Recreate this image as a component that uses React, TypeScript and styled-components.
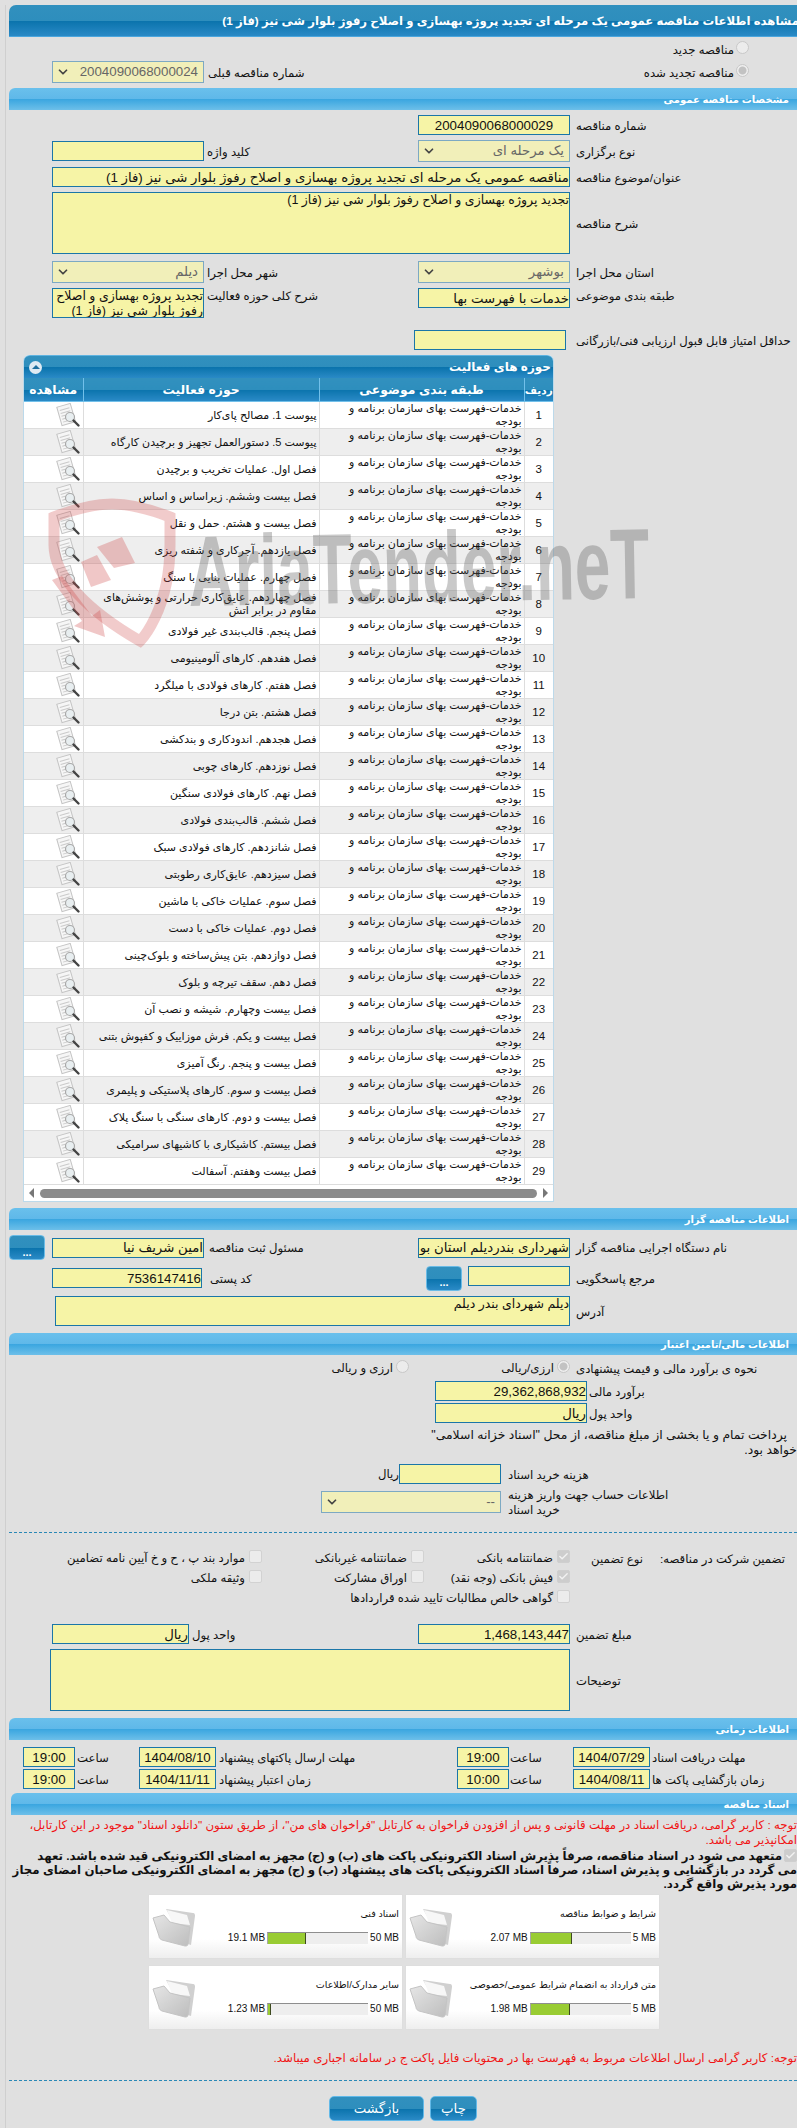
import styled, { createGlobalStyle, css } from 'styled-components'
import { Check, ChevronDown } from 'lucide-react'

const FONT = `"Liberation Sans", "DejaVu Sans", sans-serif`

const GlobalStyle = createGlobalStyle`
  html, body {
    margin: 0;
    padding: 0;
    background: #e0e0e0;
  }
  * {
    box-sizing: border-box;
  }
`

const darkGradient = css`
  background: linear-gradient(to bottom, #3190be 0%, #2e8ebd 50%, #0a73ac 51%, #2a8ac6 100%);
`

const lightGradient = css`
  background: linear-gradient(to bottom, #6ac0ec 0%, #5fb8e9 50%, #3aa6e0 51%, #6dbfe9 100%);
`

const Page = styled.div`
  position: relative;
  width: 797px;
  height: 2128px;
  overflow: hidden;
  padding: 5px 0 0 5px;
  direction: rtl;
  background: #e0e0e0;
  font-family: ${FONT};
  font-size: 11.7px;
  color: #111;
`

const Inner = styled.div`
  border-left: 1px solid #cfcfcf;
  height: 100%;
  padding-left: 3px;
`

const TitleBar = styled.div`
  ${darkGradient};
  height: 32px;
  margin-right: -2px;
  padding-top: 7px;
  border-radius: 7px 0 0 0;
  border-bottom: 1px solid #4aa6de;
  color: #fff;
  font-size: 11.7px;
  font-weight: bold;
  line-height: 18px;
  white-space: nowrap;
  overflow: hidden;
`

const SectionBar = styled.div<{ $mt: number; $inset?: number }>`
  ${lightGradient};
  height: 22px;
  margin-top: ${(p) => p.$mt}px;
  margin-left: ${(p) => p.$inset || 0}px;
  padding-right: 8px;
  border-radius: 6px 0 0 0;
  color: #fff;
  font-size: 10px;
  font-weight: bold;
  line-height: 24px;
`

const Row = styled.div<{ $mt: number; $h: number; $first?: number; $top?: boolean }>`
  display: grid;
  grid-template-columns: ${(p) => p.$first || 227}px 152px 214px 152px 1fr;
  align-items: ${(p) => (p.$top ? 'start' : 'center')};
  height: ${(p) => p.$h}px;
  margin-top: ${(p) => p.$mt}px;
`

const Label = styled.div<{ $gap?: number }>`
  margin-left: ${(p) => p.$gap ?? 6}px;
  text-align: left;
  line-height: 15px;
  white-space: nowrap;
`

const field = css`
  display: block;
  height: 20px;
  padding: 0;
  border: 1px solid #1b76a8;
  border-radius: 0;
  background: #f6f4a6;
  color: #111;
  font-family: ${FONT};
  font-size: 13.3px;
  direction: rtl;
  text-align: right;
  outline: none;
`

const Input = styled.input<{ $w?: number; $end?: boolean; $center?: boolean }>`
  ${field};
  width: ${(p) => (p.$w ? `${p.$w}px` : '100%')};
  justify-self: ${(p) => (p.$end ? 'end' : 'auto')};
  text-align: ${(p) => (p.$center ? 'center' : 'right')};
`

const Area = styled.textarea<{ $w?: number; $h: number }>`
  ${field};
  width: ${(p) => (p.$w ? `${p.$w}px` : '100%')};
  height: ${(p) => p.$h}px;
  line-height: 15px;
  font-size: 12.5px;
  resize: none;
  overflow: hidden;
`

const SelectBox = styled.div<{ $w?: number }>`
  position: relative;
  width: ${(p) => (p.$w ? `${p.$w}px` : '100%')};
  height: 22px;
  border: 1px solid #7da9c3;
  background: #f1efb9;
  color: #666;
  font-size: 13.3px;
  line-height: 20px;
  padding-right: 5px;
  white-space: nowrap;
  svg {
    position: absolute;
    left: 3px;
    top: 3px;
    color: #444;
  }
`

const Span2 = styled.div`
  grid-column: span 2;
`

const Span3 = styled.div`
  grid-column: span 3;
`

const RadioLine = styled.div`
  display: flex;
  align-items: center;
  gap: 2px;
  padding-right: 48px;
  line-height: 15px;
`

const RadioDot = styled.span<{ $on?: boolean }>`
  flex: none;
  width: 13px;
  height: 13px;
  margin-top: -4px;
  border-radius: 50%;
  border: 1px solid #c8c8c8;
  background: ${(p) => (p.$on ? 'radial-gradient(circle, #c2c2c2 0 3.5px, #eee 4.5px)' : '#ececec')};
`

const RadioOption = styled.div<{ $w?: number }>`
  display: flex;
  align-items: center;
  gap: 3px;
  width: ${(p) => (p.$w ? `${p.$w}px` : 'auto')};
`

const RadioGroup = styled.div`
  display: flex;
  grid-column: span 3;
`

const Panel = styled.div`
  width: 531px;
  margin: 5px 243px 0 0;
  border: 1px solid #bcd9ea;
  border-top: 0;
  border-radius: 6px 6px 0 0;
  background: #fff;
`

const PanelTitle = styled.div`
  ${darkGradient};
  display: flex;
  justify-content: space-between;
  align-items: center;
  height: 23px;
  padding: 0 2px 0 5px;
  border-radius: 6px 6px 0 0;
  border-top: 1px solid #5fb3e0;
  color: #fff;
  font-weight: bold;
  font-size: 12px;
`

const Collapse = styled.span`
  display: flex;
  align-items: center;
  justify-content: center;
  width: 13px;
  height: 13px;
  border-radius: 50%;
  background: #dfeaf3;
  &::before {
    content: '';
    border-left: 4px solid transparent;
    border-right: 4px solid transparent;
    border-bottom: 4px solid #1f6e9e;
  }
`

const Table = styled.table`
  width: 100%;
  table-layout: fixed;
  border-collapse: collapse;
`

const Th = styled.th<{ $w?: number; $small?: boolean }>`
  ${darkGradient};
  width: ${(p) => (p.$w ? `${p.$w}px` : 'auto')};
  height: 23.5px;
  padding: 0;
  border-left: 1px solid #72c0ea;
  border-bottom: 1px solid #72c0ea;
  color: #fff;
  font-size: ${(p) => (p.$small ? 10.5 : 12.4)}px;
  font-weight: bold;
  white-space: nowrap;
  &:last-child {
    border-left: 0;
  }
`

const Tr = styled.tr<{ $alt: boolean }>`
  background: ${(p) => (p.$alt ? '#eee' : '#fff')};
`

const Td = styled.td<{ $center?: boolean }>`
  height: 27px;
  padding: 0 2px;
  border-left: 1px solid #ddd;
  border-bottom: 1px solid #ddd;
  font-size: ${(p) => (p.$center ? 11.5 : 11)}px;
  line-height: 13px;
  text-align: ${(p) => (p.$center ? 'center' : 'right')};
  vertical-align: middle;
  overflow: hidden;
  &:last-child {
    border-left: 0;
  }
`

const DocIcon = styled.svg`
  display: block;
  margin: 0 0 0 auto;
`

const Scroller = styled.div`
  display: flex;
  align-items: center;
  gap: 6px;
  height: 16px;
  padding: 0 5px;
  direction: ltr;
  background: #fff;
  color: #777;
`

const ScrollThumb = styled.div`
  flex: 1;
  height: 9px;
  border-radius: 5px;
  background: #8b8b8b;
`

const ArrowLeft = styled.span`
  border-top: 5px solid transparent;
  border-bottom: 5px solid transparent;
  border-right: 5px solid #777;
`

const ArrowRight = styled.span`
  border-top: 5px solid transparent;
  border-bottom: 5px solid transparent;
  border-left: 5px solid #777;
`

const MoreButton = styled.button`
  ${darkGradient};
  display: block;
  width: 36px;
  height: 25px;
  padding: 8px 0 0;
  border: 1px solid #6abbe6;
  border-radius: 4px;
  color: #fff;
  font-family: ${FONT};
  font-size: 11px;
  font-weight: bold;
  line-height: 10px;
`

const InlinePair = styled.div`
  display: flex;
  align-items: flex-start;
  gap: 6px;
`

const EdgeCell = styled.div`
  margin-right: 7px;
`

const Para = styled.div<{ $mt: number; $indent?: number }>`
  margin-top: ${(p) => p.$mt}px;
  text-indent: ${(p) => p.$indent || 0}px;
  font-size: 12.4px;
  line-height: 15px;
  white-space: nowrap;
`

const Dashed = styled.div<{ $mt: number }>`
  margin-top: ${(p) => p.$mt}px;
  border-top: 1px dashed #2a88b6;
`

const Money = styled.div`
  display: flex;
  align-items: center;
`

const GuaranteeGrid = styled.div`
  display: grid;
  grid-template-columns: 227px 146px 162px 1fr;
  grid-auto-rows: 20px;
  align-items: center;
  margin-top: 15px;
  height: 60px;
`

const GuaranteeHead = styled.div`
  display: flex;
  justify-content: space-between;
  padding: 0 12px 0 0;
  width: 206px;
  line-height: 15px;
`

const Tick = styled.label<{ $span?: boolean }>`
  display: flex;
  align-items: center;
  gap: 4px;
  white-space: nowrap;
  grid-column: ${(p) => (p.$span ? 'span 3' : 'auto')};
`

const CheckMark = styled.span<{ $on?: boolean }>`
  display: flex;
  flex: none;
  align-items: center;
  justify-content: center;
  width: 13px;
  height: 13px;
  margin-top: -4px;
  border: 1px solid ${(p) => (p.$on ? '#cfcfcf' : '#d2d2d2')};
  border-radius: 2px;
  background: ${(p) => (p.$on ? '#cdcdcd' : '#ececec')};
  color: #f2f2f2;
`

const TimeRow = styled.div<{ $mt: number }>`
  display: grid;
  grid-template-columns: 147px 77px 64px 52px 241px 77px 64px 52px;
  align-items: center;
  height: 20px;
  margin-top: ${(p) => p.$mt}px;
`

const TimeInput = styled.input`
  ${field};
  width: 100%;
  text-align: center;
`

const RedText = styled.div<{ $mt: number }>`
  margin-top: ${(p) => p.$mt}px;
  color: #f01414;
  font-size: 11.8px;
  line-height: 14.5px;
  white-space: nowrap;
`

const Pledge = styled.div`
  position: relative;
  margin-top: 2px;
  padding-right: 15px;
  font-size: 11.8px;
  font-weight: bold;
  line-height: 14px;
  white-space: nowrap;
`

const PledgeLine = styled.div`
  margin-right: -15px;
`

const PledgeBox = styled(CheckMark)`
  position: absolute;
  right: 0;
  top: 0;
  margin: 0;
`

const CardGrid = styled.div`
  display: grid;
  grid-template-columns: 253px 253px;
  grid-auto-rows: 63px;
  gap: 8px 4px;
  width: 510px;
  margin: 4px 138px 0 0;
`

const Card = styled.div`
  position: relative;
  padding: 11px 3px 0 4px;
  background: linear-gradient(to bottom, #fff 70%, #eeeeee 100%);
  box-shadow: 0 0 1px #d4d4d4;
`

const CardTitle = styled.div`
  height: 26px;
  line-height: 15px;
  font-size: 9.5px;
  white-space: nowrap;
`

const Progress = styled.div`
  display: flex;
  justify-content: flex-start;
  align-items: center;
  gap: 2px;
  font-size: 10px;
  line-height: 12px;
`

const Size = styled.span`
  direction: ltr;
  unicode-bidi: isolate;
  white-space: nowrap;
`

const Bar = styled.div`
  width: 101px;
  height: 12px;
  direction: ltr;
  border-top: 1px solid #8e8e8e;
  border-left: 1px solid #a8a8a8;
  background: #eeeeee;
`

const BarFill = styled.div`
  height: 100%;
  border-right: 1px solid #3e4a20;
  background: #99cc33;
`

const FolderPic = styled.svg`
  position: absolute;
  left: 3px;
  top: 12px;
`

const Buttons = styled.div`
  display: flex;
  gap: 6px;
  margin: 15px 320px 0 0;
`

const ActionButton = styled.button<{ $w: number }>`
  ${darkGradient};
  width: ${(p) => p.$w}px;
  height: 25px;
  padding: 0;
  border: 1px solid #62b9e8;
  border-radius: 5px;
  color: #fff;
  font-family: ${FONT};
  font-size: 13.3px;
`

const Watermark = styled.svg`
  position: absolute;
  left: 0;
  top: 480px;
  pointer-events: none;
`

const activities = [
  'پیوست 1. مصالح پای‌کار',
  'پیوست 5. دستورالعمل تجهیز و برچیدن کارگاه',
  'فصل اول. عملیات تخریب و برچیدن',
  'فصل بیست وششم. زیراساس و اساس',
  'فصل بیست و هشتم. حمل و نقل',
  'فصل یازدهم. آجرکاری و شفته ریزی',
  'فصل چهارم. عملیات بنایی با سنگ',
  'فصل چهاردهم. عایق‌کاری حرارتی و پوشش‌های مقاوم در برابر آتش',
  'فصل پنجم. قالب‌بندی غیر فولادی',
  'فصل هفدهم. کارهای آلومینیومی',
  'فصل هفتم. کارهای فولادی با میلگرد',
  'فصل هشتم. بتن درجا',
  'فصل هجدهم. اندودکاری و بندکشی',
  'فصل نوزدهم. کارهای چوبی',
  'فصل نهم. کارهای فولادی سنگین',
  'فصل ششم. قالب‌بندی فولادی',
  'فصل شانزدهم. کارهای فولادی سبک',
  'فصل سیزدهم. عایق‌کاری رطوبتی',
  'فصل سوم. عملیات خاکی با ماشین',
  'فصل دوم. عملیات خاکی با دست',
  'فصل دوازدهم. بتن پیش‌ساخته و بلوک‌چینی',
  'فصل دهم. سقف تیرچه و بلوک',
  'فصل بیست وچهارم. شیشه و نصب آن',
  'فصل بیست و یکم. فرش موزاییک و کفپوش بتنی',
  'فصل بیست و پنجم. رنگ آمیزی',
  'فصل بیست و سوم. کارهای پلاستیکی و پلیمری',
  'فصل بیست و دوم. کارهای سنگی با سنگ پلاک',
  'فصل بیستم. کاشیکاری با کاشیهای سرامیکی',
  'فصل بیست وهفتم. آسفالت',
]

const uploads = [
  { title: 'شرایط و ضوابط مناقصه', used: 2.07, max: 5 },
  { title: 'اسناد فنی', used: 19.1, max: 50 },
  { title: 'متن قرارداد به انضمام شرایط عمومی/خصوصی', used: 1.98, max: 5 },
  { title: 'سایر مدارک/اطلاعات', used: 1.23, max: 50 },
]

function ReportIcon() {
  return (
    <DocIcon width="25" height="25" viewBox="0 0 25 25">
      <g transform="rotate(-16 10 11)">
        <rect x="3" y="2" width="14" height="19" fill="#f6f6f6" stroke="#c4c4c4" />
        <path d="M5 6h10M5 9h10M5 12h6M5 15h6M5 18h9" stroke="#cacaca" fill="none" />
      </g>
      <circle cx="14" cy="14" r="4.5" fill="#e8eef0" stroke="#a8a8a8" strokeWidth="1.2" />
      <path d="M17.5 17.5l5 5" stroke="#444" strokeWidth="2.4" strokeLinecap="round" />
    </DocIcon>
  )
}

function FolderIcon() {
  return (
    <FolderPic width="44" height="40" viewBox="0 0 44 40">
      <defs>
        <linearGradient id="folderFace" x1="0" y1="0" x2="1" y2="1">
          <stop offset="0" stopColor="#e6e6e6" />
          <stop offset="1" stopColor="#bdbdbd" />
        </linearGradient>
      </defs>
      <path d="M14 2l27 4c2 0 2 2 2 3l-4 29-6-2z" fill="#d0d0d0" />
      <path d="M15 3l20 5 3 10-18-2z" fill="#f7f7f7" />
      <path d="M1 11l11-3 6 7 20 5-2 17c0 2-2 2-3 2L10 33C8 32 7 31 7 29z" fill="url(#folderFace)" stroke="#c4c4c4" />
    </FolderPic>
  )
}

export default function App() {
  return (
    <Page>
      <GlobalStyle />
      <Inner>
        <TitleBar>مشاهده اطلاعات مناقصه عمومی یک مرحله ای تجدید پروژه بهسازی و اصلاح رفوژ بلوار شی نیز (فاز 1)</TitleBar>

        <Row $mt={5} $h={14}>
          <Span2>
            <RadioLine>
              <RadioDot />
              مناقصه جدید
            </RadioLine>
          </Span2>
        </Row>
        <Row $mt={5} $h={22}>
          <Span2>
            <RadioLine>
              <RadioDot $on />
              مناقصه تجدید شده
            </RadioLine>
          </Span2>
          <Label $gap={4}>شماره مناقصه قبلی</Label>
          <SelectBox>
            2004090068000024
            <ChevronDown size={14} strokeWidth={3} />
          </SelectBox>
        </Row>

        <SectionBar $mt={5}>مشخصات مناقصه عمومی</SectionBar>

        <Row $mt={5} $h={20}>
          <Label>شماره مناقصه</Label>
          <Input $center readOnly value="2004090068000029" />
        </Row>
        <Row $mt={5} $h={22}>
          <Label>نوع برگزاری</Label>
          <SelectBox>
            یک مرحله ای
            <ChevronDown size={14} strokeWidth={3} />
          </SelectBox>
          <Label $gap={3}>کلید واژه</Label>
          <Input readOnly value="" />
        </Row>
        <Row $mt={5} $h={20}>
          <Label>عنوان/موضوع مناقصه</Label>
          <Span3>
            <Input readOnly value="مناقصه عمومی یک مرحله ای تجدید پروژه بهسازی و اصلاح رفوژ بلوار شی نیز (فاز 1)" />
          </Span3>
        </Row>
        <Row $mt={5} $h={62}>
          <Label>شرح مناقصه</Label>
          <Span3>
            <Area $h={62} readOnly value="تجدید پروژه بهسازی و اصلاح رفوژ بلوار شی نیز (فاز 1)" />
          </Span3>
        </Row>
        <Row $mt={7} $h={22}>
          <Label>استان محل اجرا</Label>
          <SelectBox>
            بوشهر
            <ChevronDown size={14} strokeWidth={3} />
          </SelectBox>
          <Label $gap={3}>شهر محل اجرا</Label>
          <SelectBox>
            دیلم
            <ChevronDown size={14} strokeWidth={3} />
          </SelectBox>
        </Row>
        <Row $mt={5} $h={30} $top>
          <Label>طبقه بندی موضوعی</Label>
          <Input readOnly value="خدمات با فهرست بها" />
          <Label $gap={3}>شرح کلی حوزه فعالیت</Label>
          <Area $h={30} readOnly value="تجدید پروژه بهسازی و اصلاح رفوژ بلوار شی نیز (فاز 1)" />
        </Row>
        <Row $mt={12} $h={20} $first={231}>
          <Label $gap={10}>حداقل امتیاز قابل قبول ارزیابی فنی/بازرگانی</Label>
          <Input readOnly value="" />
        </Row>

        <Panel>
          <PanelTitle>
            حوزه های فعالیت
            <Collapse />
          </PanelTitle>
          <Table>
            <thead>
              <tr>
                <Th $w={29} $small>ردیف</Th>
                <Th $w={205}>طبقه بندی موضوعی</Th>
                <Th $w={236}>حوزه فعالیت</Th>
                <Th>مشاهده</Th>
              </tr>
            </thead>
            <tbody>
              {activities.map((name, i) => (
                <Tr key={name} $alt={i % 2 === 1}>
                  <Td $center>{i + 1}</Td>
                  <Td>
                    خدمات-فهرست بهای سازمان برنامه و
                    <br />
                    بودجه
                  </Td>
                  <Td>{name}</Td>
                  <Td>
                    <ReportIcon />
                  </Td>
                </Tr>
              ))}
            </tbody>
          </Table>
          <Scroller>
            <ArrowLeft />
            <ScrollThumb />
            <ArrowRight />
          </Scroller>
        </Panel>

        <SectionBar $mt={6}>اطلاعات مناقصه گزار</SectionBar>

        <Row $mt={5} $h={24}>
          <Label>نام دستگاه اجرایی مناقصه گزار</Label>
          <Input readOnly value="شهرداری بندردیلم استان بوشهر" />
          <Label $gap={5}>مسئول ثبت مناقصه</Label>
          <Input readOnly value="امین شریف نیا" />
          <EdgeCell>
            <MoreButton>...</MoreButton>
          </EdgeCell>
        </Row>
        <Row $mt={6} $h={26}>
          <Label>مرجع پاسخگویی</Label>
          <InlinePair>
            <Input $w={102} readOnly value="" />
            <MoreButton>...</MoreButton>
          </InlinePair>
          <Label $gap={6}>کد پستی</Label>
          <Input $w={150} $end readOnly value="7536147416" />
        </Row>
        <Row $mt={5} $h={30}>
          <Label>آدرس</Label>
          <Span3>
            <Area $w={515} $h={30} readOnly value="دیلم شهرداى بندر دیلم" />
          </Span3>
        </Row>

        <SectionBar $mt={7}>اطلاعات مالی/تامین اعتبار</SectionBar>

        <Row $mt={5} $h={16}>
          <Label>نحوه ی برآورد مالی و قیمت پیشنهادی</Label>
          <RadioGroup>
            <RadioOption $w={161}>
              <RadioDot $on />
              ارزی/ریالی
            </RadioOption>
            <RadioOption>
              <RadioDot />
              ارزی و ریالی
            </RadioOption>
          </RadioGroup>
        </Row>
        <Row $mt={5} $h={20} $first={210}>
          <Label $gap={2}>برآورد مالی</Label>
          <Input readOnly value="29,362,868,932" />
        </Row>
        <Row $mt={2} $h={20} $first={210}>
          <Label $gap={2}>واحد پول</Label>
          <Input readOnly value="ریال" />
        </Row>
        <Para $mt={5} $indent={10}>
          پرداخت تمام و یا بخشی از مبلغ مناقصه، از محل "اسناد خزانه اسلامی"
          <br />
          خواهد بود.
        </Para>
        <Row $mt={6} $h={20} $first={296}>
          <Label $gap={7}>هزینه خرید اسناد</Label>
          <Money>
            <Input $w={102} readOnly value="" />
            ریال
          </Money>
        </Row>
        <Row $mt={3} $h={28} $first={296}>
          <Label $gap={7}>
            اطلاعات حساب جهت واریز هزینه
            <br />
            خرید اسناد
          </Label>
          <SelectBox $w={180}>
            --
            <ChevronDown size={14} strokeWidth={3} />
          </SelectBox>
        </Row>

        <Dashed $mt={17} />

        <GuaranteeGrid>
          <GuaranteeHead>
            <span>تضمین شرکت در مناقصه:</span>
            <span>نوع تضمین</span>
          </GuaranteeHead>
          <Tick>
            <CheckMark $on>
              <Check size={11} strokeWidth={3} />
            </CheckMark>
            ضمانتنامه بانکی
          </Tick>
          <Tick>
            <CheckMark />
            ضمانتنامه غیربانکی
          </Tick>
          <Tick>
            <CheckMark />
            موارد بند پ ، ح و خ آیین نامه تضامین
          </Tick>
          <span />
          <Tick>
            <CheckMark $on>
              <Check size={11} strokeWidth={3} />
            </CheckMark>
            فیش بانکی (وجه نقد)
          </Tick>
          <Tick>
            <CheckMark />
            اوراق مشارکت
          </Tick>
          <Tick>
            <CheckMark />
            وثیقه ملکی
          </Tick>
          <span />
          <Tick $span>
            <CheckMark />
            گواهی خالص مطالبات تایید شده قراردادها
          </Tick>
        </GuaranteeGrid>

        <Row $mt={16} $h={20}>
          <Label>مبلغ تضمین</Label>
          <Input readOnly value="1,468,143,447" />
          <Label $gap={-12}>واحد پول</Label>
          <Input $w={137} $end readOnly value="ریال" />
        </Row>
        <Row $mt={5} $h={62}>
          <Label>توضیحات</Label>
          <Span3>
            <Area $w={520} $h={62} readOnly value="" />
          </Span3>
        </Row>

        <SectionBar $mt={7}>اطلاعات زمانی</SectionBar>

        <TimeRow $mt={7}>
          <Label $gap={2}>مهلت دریافت اسناد</Label>
          <TimeInput readOnly value="1404/07/29" />
          <Label $gap={1}>ساعت</Label>
          <TimeInput readOnly value="19:00" />
          <Label $gap={3}>مهلت ارسال پاکتهای پیشنهاد</Label>
          <TimeInput readOnly value="1404/08/10" />
          <Label $gap={2}>ساعت</Label>
          <TimeInput readOnly value="19:00" />
        </TimeRow>
        <TimeRow $mt={2}>
          <Label $gap={2}>زمان بازگشایی پاکت ها</Label>
          <TimeInput readOnly value="1404/08/11" />
          <Label $gap={1}>ساعت</Label>
          <TimeInput readOnly value="10:00" />
          <Label $gap={3}>زمان اعتبار پیشنهاد</Label>
          <TimeInput readOnly value="1404/11/11" />
          <Label $gap={2}>ساعت</Label>
          <TimeInput readOnly value="19:00" />
        </TimeRow>

        <SectionBar $mt={4} $inset={2}>اسناد مناقصه</SectionBar>

        <RedText $mt={3}>
          توجه : کاربر گرامی، دریافت اسناد در مهلت قانونی و پس از افزودن فراخوان به کارتابل "فراخوان های من"، از طریق ستون "دانلود اسناد" موجود در این کارتابل،
          <br />
          امکانپذیر می باشد.
        </RedText>
        <Pledge>
          <PledgeBox $on>
            <Check size={11} strokeWidth={3} />
          </PledgeBox>
          متعهد می شود در اسناد مناقصه، صرفاً پذیرش اسناد الکترونیکی پاکت های (ب) و (ج) مجهز به امضای الکترونیکی قید شده باشد. تعهد
          <PledgeLine>می گردد در بازگشایی و پذیرش اسناد، صرفاً اسناد الکترونیکی پاکت های پیشنهاد (ب) و (ج) مجهز به امضای الکترونیکی صاحبان امضای مجاز</PledgeLine>
          <PledgeLine>مورد پذیرش واقع گردد.</PledgeLine>
        </Pledge>

        <CardGrid>
          {uploads.map((u) => (
            <Card key={u.title}>
              <CardTitle>{u.title}</CardTitle>
              <Progress>
                <Size>{u.max} MB</Size>
                <Bar>
                  <BarFill style={{ width: `${(u.used / u.max) * 100}%` }} />
                </Bar>
                <Size>{u.used} MB</Size>
              </Progress>
              <FolderIcon />
            </Card>
          ))}
        </CardGrid>

        <RedText $mt={22}>توجه: کاربر گرامی ارسال اطلاعات مربوط به فهرست بها در محتویات فایل پاکت ج در سامانه اجباری میباشد.</RedText>

        <Dashed $mt={14} />

        <Buttons>
          <ActionButton $w={47}>چاپ</ActionButton>
          <ActionButton $w={95}>بازگشت</ActionButton>
        </Buttons>
      </Inner>

      <Watermark width="700" height="170" viewBox="0 0 700 170">
        <path
          d="M112 24C92 24 72 30 54 37v28c0 32 34 66 86 96 0 0 30-30 30-96V37c-18-7-38-13-58-13z"
          fill="none"
          stroke="rgba(205,70,70,0.28)"
          strokeWidth="11"
        />
        <g fill="rgba(205,70,70,0.3)">
          <polygon points="97,67 122,57 135,83 114,88" />
          <polygon points="81,82 97,75 111,100 91,107" />
          <polygon points="52,100 62,96 92,136 100,130 105,157 74,146 82,141" />
        </g>
        <text
          x="189"
          y="126"
          fontFamily="Liberation Sans"
          fontWeight="bold"
          fontSize="100"
          textLength="461"
          lengthAdjust="spacingAndGlyphs"
          direction="ltr"
          fill="rgba(90,90,90,0.33)"
          transform="rotate(-1 189 126)"
        >
          AriaTender.neT
        </text>
      </Watermark>
    </Page>
  )
}
